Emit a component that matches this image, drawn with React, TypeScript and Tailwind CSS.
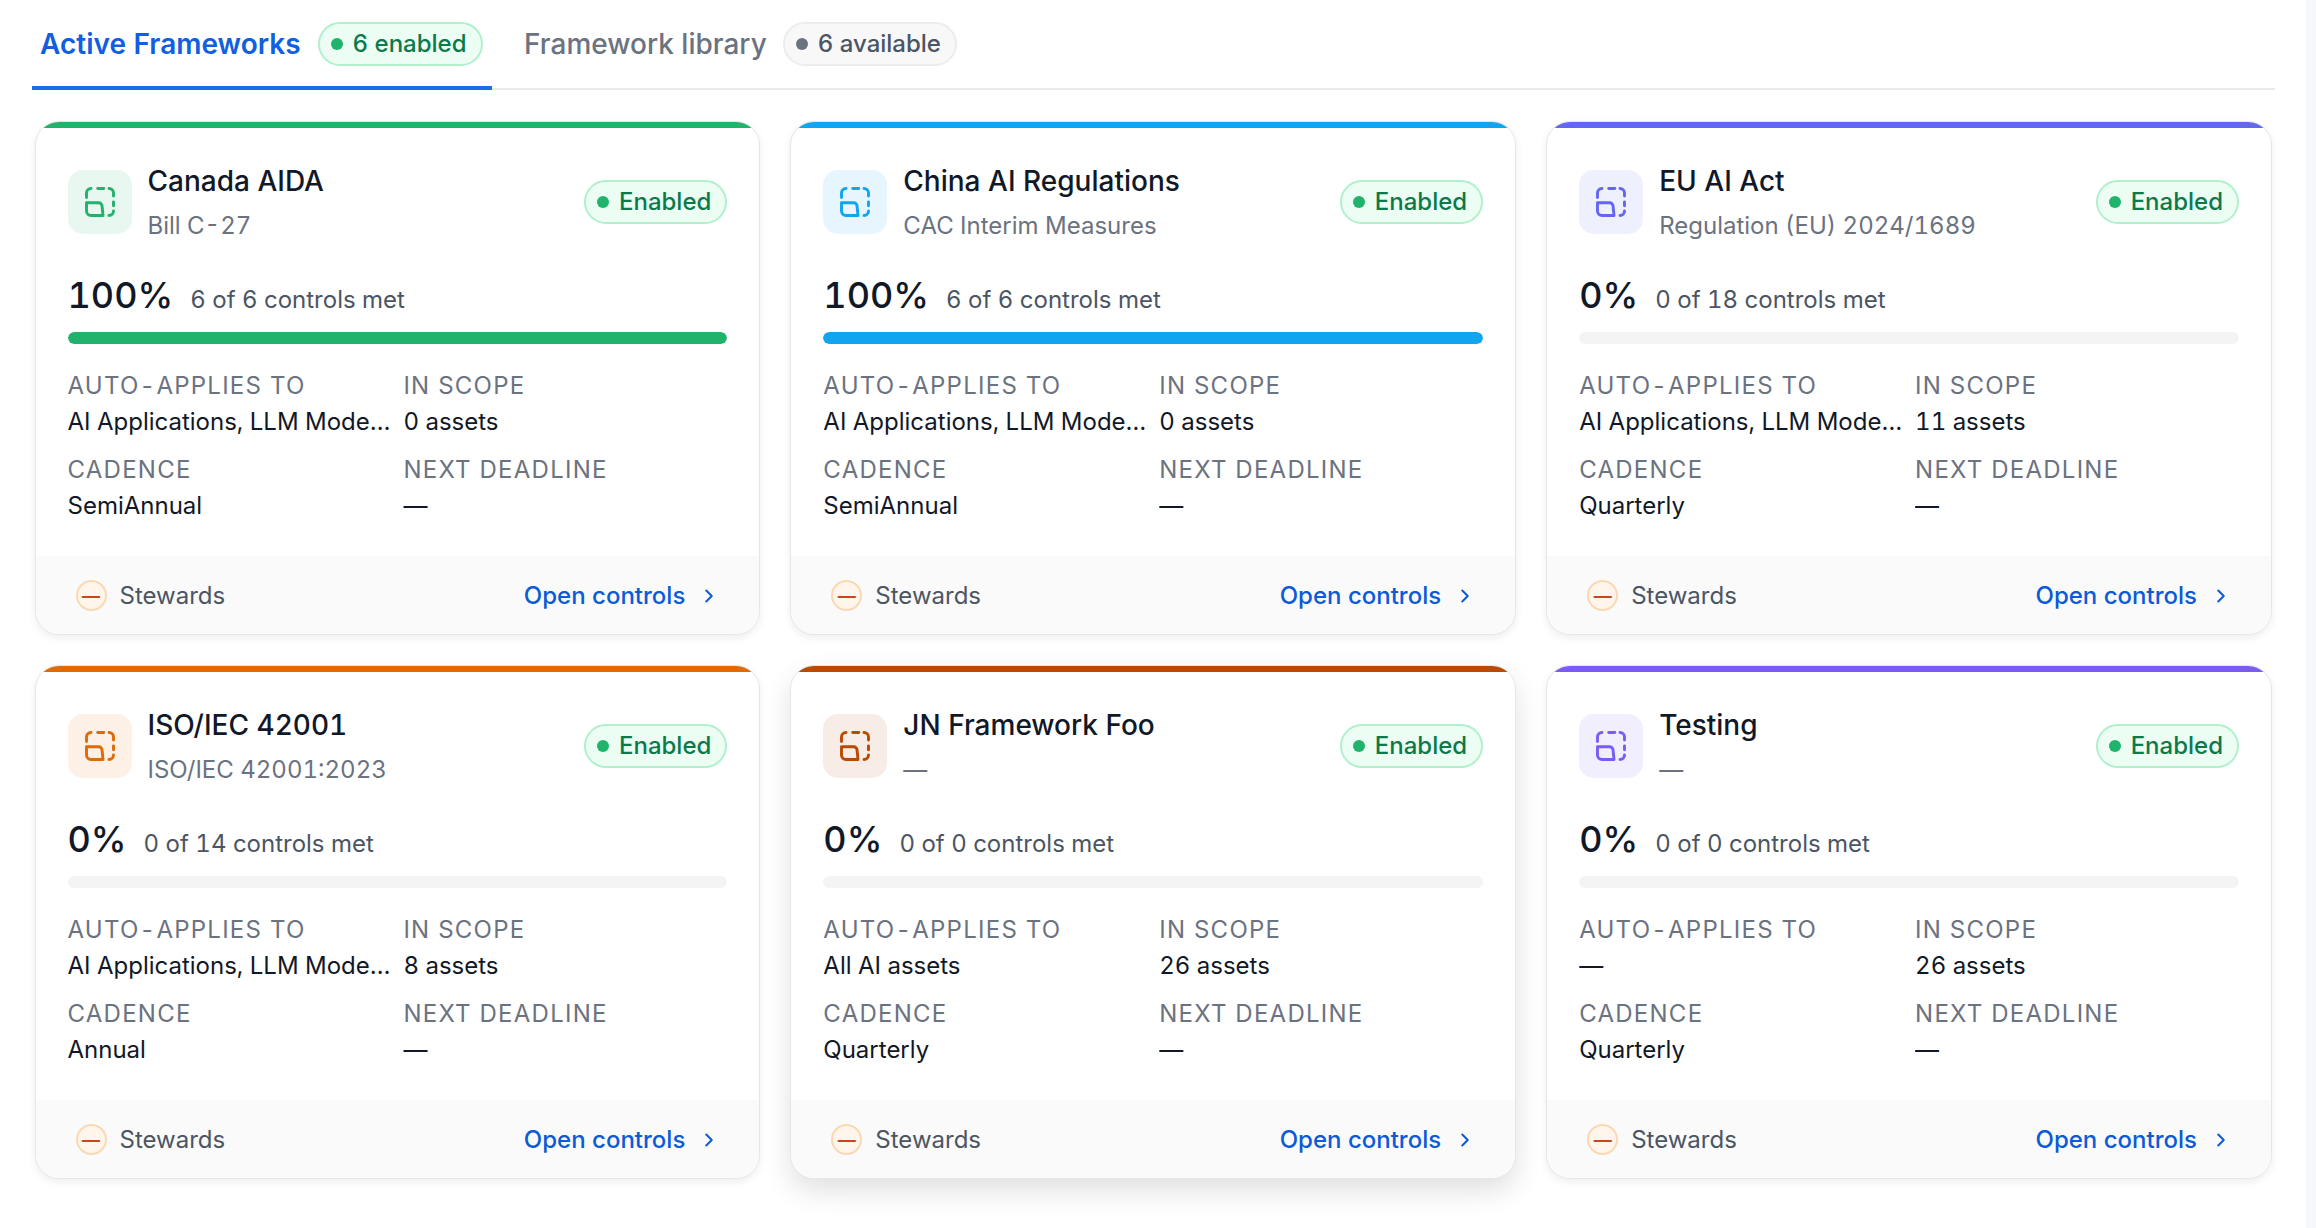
const cards = [
  { name: "Canada AIDA", sub: "Bill C-27", pct: 100, met: "6 of 6 controls met", applies: "AI Applications, LLM Models, Agents", scope: "0 assets", cadence: "SemiAnnual", color: "#1fb36b", tint: "#e8f7f0", hover: false },
  { name: "China AI Regulations", sub: "CAC Interim Measures", pct: 100, met: "6 of 6 controls met", applies: "AI Applications, LLM Models, Agents", scope: "0 assets", cadence: "SemiAnnual", color: "#12a5ef", tint: "#e7f6fe", hover: false },
  { name: "EU AI Act", sub: "Regulation (EU) 2024/1689", pct: 0, met: "0 of 18 controls met", applies: "AI Applications, LLM Models, Agents", scope: "11 assets", cadence: "Quarterly", color: "#6366f1", tint: "#eff0fe", hover: false },
  { name: "ISO/IEC 42001", sub: "ISO/IEC 42001:2023", pct: 0, met: "0 of 14 controls met", applies: "AI Applications, LLM Models, Agents", scope: "8 assets", cadence: "Annual", color: "#e06a04", tint: "#fcf0e7", hover: false },
  { name: "JN Framework Foo", sub: "—", pct: 0, met: "0 of 0 controls met", applies: "All AI assets", scope: "26 assets", cadence: "Quarterly", color: "#b84a04", tint: "#f7ece6", hover: true },
  { name: "Testing", sub: "—", pct: 0, met: "0 of 0 controls met", applies: "—", scope: "26 assets", cadence: "Quarterly", color: "#7a5cf5", tint: "#f1eefe", hover: false },
];

function FrameworkIcon({ color }: { color: string }) {
  return (
    <svg width="36" height="36" viewBox="0 0 24 24" fill="none" stroke={color} strokeWidth="1.95" strokeLinecap="round" strokeLinejoin="round">
      <path d="M3 12.5h8a2.4 2.4 0 0 1 2.4 2.4L14 21H6a3 3 0 0 1-3-3z" />
      <path d="M3 9V6a3 3 0 0 1 3-3" />
      <path d="M10.5 3h4" />
      <path d="M18 3a3 3 0 0 1 3 3v2" />
      <path d="M21 12v2.5" />
      <path d="M21 18a3 3 0 0 1-3 3" />
    </svg>
  );
}

function Pill({ label, green }: { label: string; green: boolean }) {
  return (
    <span className={`inline-flex h-[44px] items-center gap-[10px] rounded-full border-2 pr-[14px] pl-[11px] text-[24px] font-medium ${green ? "border-[#b0f0cd] bg-[#ecfdf3] text-[#0b7a4b]" : "border-[#ececee] bg-[#f8f8f9] text-[#4b5563]"}`}>
      <span className={`h-[12px] w-[12px] rounded-full ${green ? "bg-[#1fb36b]" : "bg-[#6b7280]"}`} />
      {label}
    </span>
  );
}

function Field({ label, value }: { label: string; value: string }) {
  return (
    <div className="flex min-w-0 flex-col gap-[6px]">
      <div className="mt-[1px] h-[30px] text-[24px] leading-[30px] tracking-[1.25px] text-[#6b7280]">{label}</div>
      <div className="h-[30px] truncate text-[24px] leading-[30px] text-[#111827]">{value}</div>
    </div>
  );
}

function Card({ c }: { c: (typeof cards)[number] }) {
  return (
    <div className={`flex flex-col overflow-hidden rounded-[24px] border border-[#e6e6e8] bg-white ${c.hover ? "shadow-[0_12px_28px_rgba(0,0,0,0.12)]" : "shadow-[0_3px_9px_rgba(0,0,0,0.07)]"}`}>
      <div className="h-[6px]" style={{ backgroundColor: c.color }} />
      <div className="pt-[42px] pr-[32px] pb-[35px] pl-[32px]">
        <div className="flex h-[64px] items-center justify-between">
          <div className="flex items-center gap-[16px]">
            <div className="flex h-[64px] w-[64px] items-center justify-center rounded-[15px]" style={{ backgroundColor: c.tint }}>
              <FrameworkIcon color={c.color} />
            </div>
            <div className="flex flex-col gap-[15px]">
              <div className="text-[28px] leading-[32px] font-medium text-[#111827]">{c.name}</div>
              <div className="text-[24px] leading-[28px] text-[#6b7280]">{c.sub}</div>
            </div>
          </div>
          <Pill label="Enabled" green />
        </div>
        <div className="mt-[38px] flex h-[46px] items-baseline gap-[17px]">
          <span className="text-[36px] leading-[46px] font-medium text-[#111827]">{c.pct}%</span>
          <span className="text-[24px] text-[#4b5563]">{c.met}</span>
        </div>
        <div className="mt-[14px] h-[12px] overflow-hidden rounded-full bg-[#f4f4f5]">
          <div className="h-full rounded-full" style={{ width: `${c.pct}%`, backgroundColor: c.color }} />
        </div>
        <div className="mt-[26px] grid grid-cols-2 gap-x-[12px] gap-y-[17px]">
          <Field label="AUTO-APPLIES TO" value={c.applies} />
          <Field label="IN SCOPE" value={c.scope} />
          <Field label="CADENCE" value={c.cadence} />
          <Field label="NEXT DEADLINE" value="—" />
        </div>
      </div>
      <div className="flex h-[78px] items-center justify-between bg-[#fafafa] pt-[1px] pr-[39px] pl-[40px]">
        <div className="flex items-center gap-[13px]">
          <span className="flex h-[31px] w-[31px] items-center justify-center rounded-full border-2 border-[#f8d9b4] bg-[#fff5eb] text-[18px] font-semibold text-[#c8451f]">—</span>
          <span className="text-[24px] text-[#4b5563]">Stewards</span>
        </div>
        <div className="flex items-center gap-[13px] text-[24px] font-medium text-[#0b5ad9]">
          Open controls
          <svg width="22" height="22" viewBox="0 0 24 24" fill="none" stroke="currentColor" strokeWidth="2.2" strokeLinecap="round" strokeLinejoin="round"><path d="m9 6 6 6-6 6" /></svg>
        </div>
      </div>
    </div>
  );
}

export default function App() {
  return (
    <div className="flex min-h-[1228px] bg-white font-['Inter',sans-serif] tabular-nums">
      <main className="flex-1 pr-[31px] pl-[32px]">
        <div className="flex h-[90px] border-b-2 border-[#e9e9eb]">
          <div className="-mb-[2px] flex w-[460px] items-start gap-[17px] border-b-4 border-[#1a6fe8] pt-[22px] pl-[8px]">
            <span className="text-[28px] leading-[44px] font-semibold text-[#0f5fe0]">Active Frameworks</span>
            <Pill label="6 enabled" green />
          </div>
          <div className="flex items-start gap-[16px] pt-[22px] pl-[32px]">
            <span className="text-[28px] leading-[44px] font-medium text-[#6b7280]">Framework library</span>
            <Pill label="6 available" green={false} />
          </div>
        </div>
        <div className="grid grid-cols-3 gap-[30px] pt-[31px] pr-[3px] pl-[2.5px]">
          {cards.map((c) => <Card key={c.name} c={c} />)}
        </div>
      </main>
      <div className="w-[10px] bg-[#f6f7fb]" />
    </div>
  );
}
